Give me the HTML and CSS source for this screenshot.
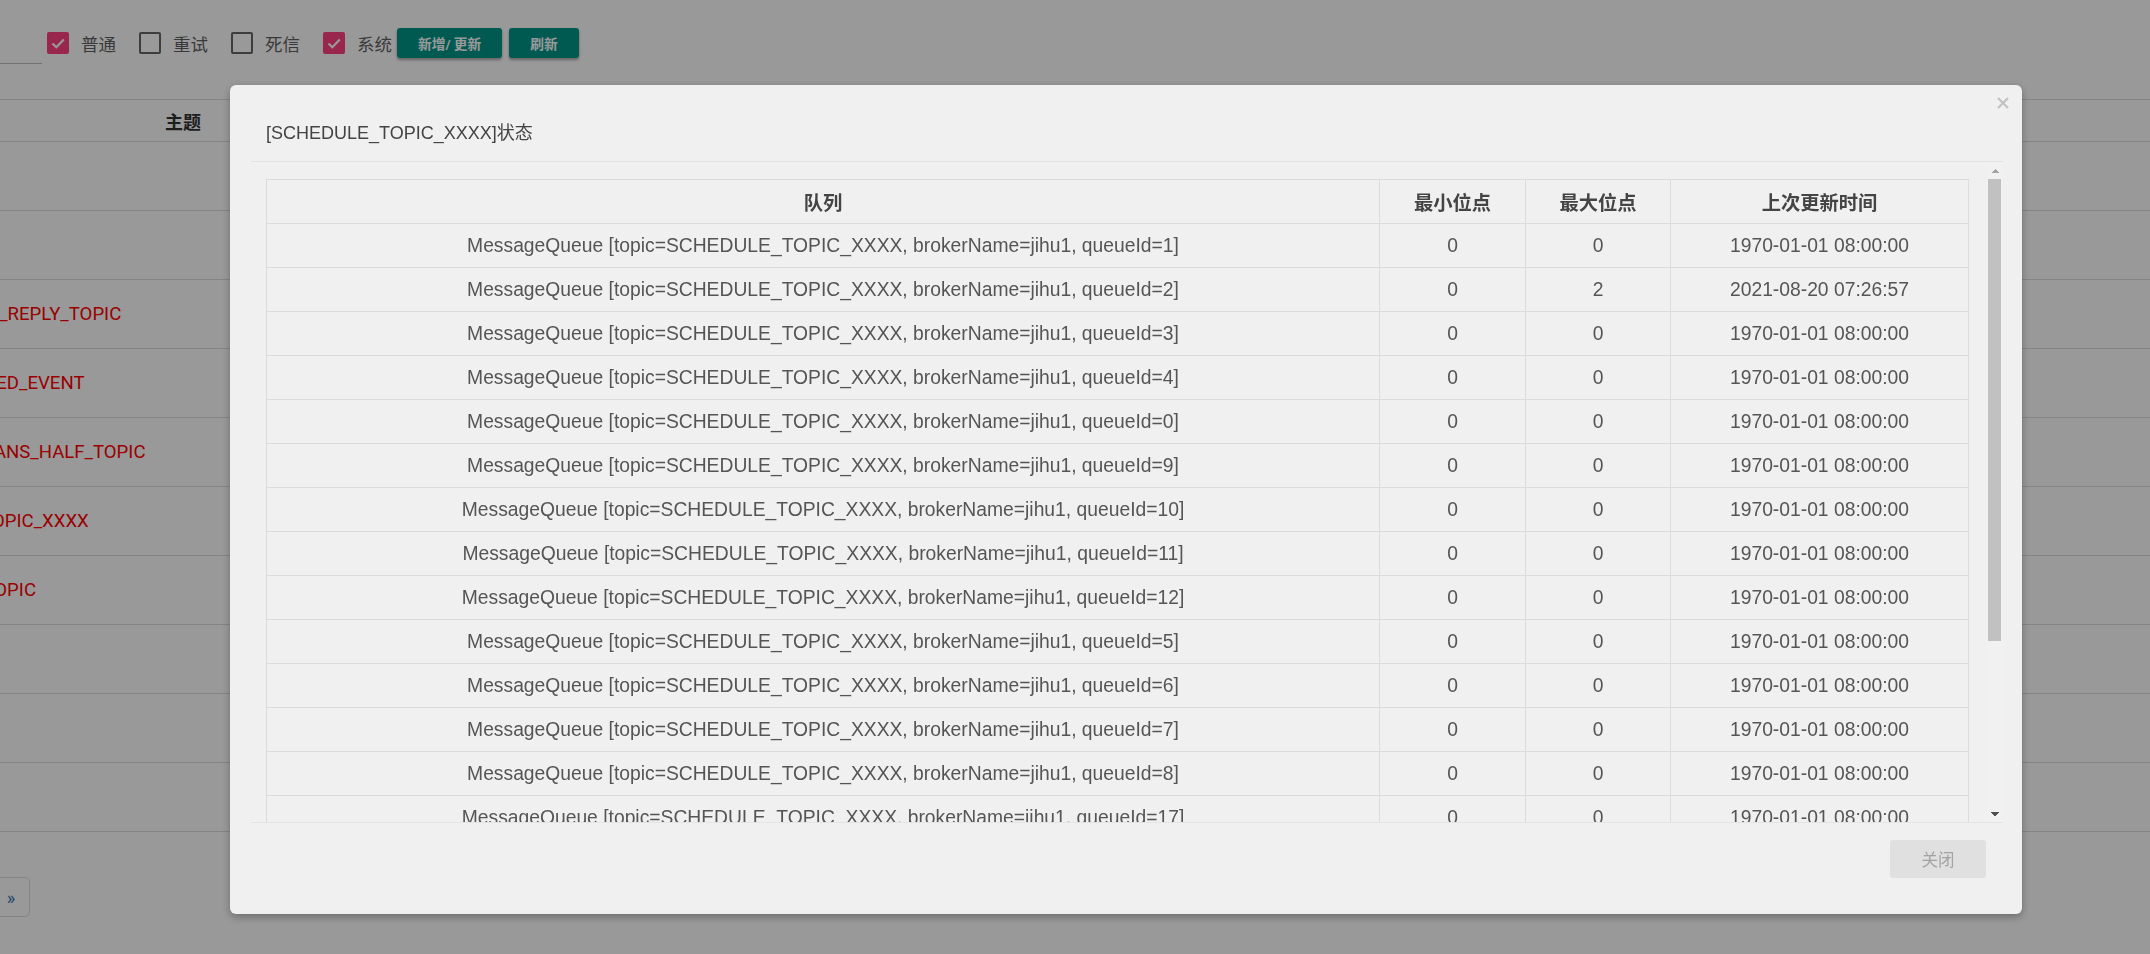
FILE: index.html
```html
<!DOCTYPE html>
<html lang="zh-CN">
<head>
<meta charset="utf-8">
<title>Topic</title>
<link rel="stylesheet" href="styles.css">
</head>
<body>
<div class="page">
  <div class="toolbar">
    <div class="filter-input"></div>
    <label class="chk"><span class="box checked"><svg viewBox="0 0 22 22" width="22" height="22"><path d="M5.5 11.5l3.8 3.8 7.5-7.8" fill="none" stroke="#fff" stroke-width="2.2"/></svg></span><span class="chk-label">普通</span></label>
    <label class="chk"><span class="box"></span><span class="chk-label">重试</span></label>
    <label class="chk"><span class="box"></span><span class="chk-label">死信</span></label>
    <label class="chk last"><span class="box checked"><svg viewBox="0 0 22 22" width="22" height="22"><path d="M5.5 11.5l3.8 3.8 7.5-7.8" fill="none" stroke="#fff" stroke-width="2.2"/></svg></span><span class="chk-label">系统</span></label>
    <button class="btn-raised">新增/ 更新</button>
    <button class="btn-raised">刷新</button>
  </div>
  <table class="topic-table">
    <thead>
      <tr><th class="col-topic">主题</th><th>操作</th></tr>
    </thead>
    <tbody>
      <tr><td class="topic">TBW102</td><td></td></tr>
      <tr><td class="topic">Benchmark</td><td></td></tr>
      <tr><td class="topic">DefaultCluster_REPLY_TOPIC</td><td></td></tr>
      <tr><td class="topic">OFFSET_MOVED_EVENT</td><td></td></tr>
      <tr><td class="topic">RMQ_SYS_TRANS_HALF_TOPIC</td><td></td></tr>
      <tr><td class="topic">SCHEDULE_TOPIC_XXXX</td><td></td></tr>
      <tr><td class="topic">SELF_TEST_TOPIC</td><td></td></tr>
      <tr><td class="topic">jihu1</td><td></td></tr>
      <tr><td class="topic">TopicA</td><td></td></tr>
      <tr><td class="topic">TopicB</td><td></td></tr>
    </tbody>
  </table>
  <ul class="pager">
    <li>«</li>
    <li>1</li>
    <li class="next">»</li>
  </ul>
</div>

<div class="backdrop">
  <div class="modal">
    <button class="close" aria-label="close"><svg viewBox="0 0 12 12" width="12" height="12"><path d="M1 1L11 11M11 1L1 11" stroke="#c2c2c2" stroke-width="2.2"/></svg></button>
    <div class="modal-header">[SCHEDULE_TOPIC_XXXX]状态</div>
    <div class="modal-body">
      <div class="scroll-content">
        <table class="queue-table">
          <colgroup><col class="c1"><col class="c2"><col class="c3"><col></colgroup>
          <thead>
            <tr><th>队列</th><th>最小位点</th><th>最大位点</th><th>上次更新时间</th></tr>
          </thead>
          <tbody>
            <tr><td>MessageQueue [topic=SCHEDULE_TOPIC_XXXX, brokerName=jihu1, queueId=1]</td><td>0</td><td>0</td><td>1970-01-01 08:00:00</td></tr>
            <tr><td>MessageQueue [topic=SCHEDULE_TOPIC_XXXX, brokerName=jihu1, queueId=2]</td><td>0</td><td>2</td><td>2021-08-20 07:26:57</td></tr>
            <tr><td>MessageQueue [topic=SCHEDULE_TOPIC_XXXX, brokerName=jihu1, queueId=3]</td><td>0</td><td>0</td><td>1970-01-01 08:00:00</td></tr>
            <tr><td>MessageQueue [topic=SCHEDULE_TOPIC_XXXX, brokerName=jihu1, queueId=4]</td><td>0</td><td>0</td><td>1970-01-01 08:00:00</td></tr>
            <tr><td>MessageQueue [topic=SCHEDULE_TOPIC_XXXX, brokerName=jihu1, queueId=0]</td><td>0</td><td>0</td><td>1970-01-01 08:00:00</td></tr>
            <tr><td>MessageQueue [topic=SCHEDULE_TOPIC_XXXX, brokerName=jihu1, queueId=9]</td><td>0</td><td>0</td><td>1970-01-01 08:00:00</td></tr>
            <tr><td>MessageQueue [topic=SCHEDULE_TOPIC_XXXX, brokerName=jihu1, queueId=10]</td><td>0</td><td>0</td><td>1970-01-01 08:00:00</td></tr>
            <tr><td>MessageQueue [topic=SCHEDULE_TOPIC_XXXX, brokerName=jihu1, queueId=11]</td><td>0</td><td>0</td><td>1970-01-01 08:00:00</td></tr>
            <tr><td>MessageQueue [topic=SCHEDULE_TOPIC_XXXX, brokerName=jihu1, queueId=12]</td><td>0</td><td>0</td><td>1970-01-01 08:00:00</td></tr>
            <tr><td>MessageQueue [topic=SCHEDULE_TOPIC_XXXX, brokerName=jihu1, queueId=5]</td><td>0</td><td>0</td><td>1970-01-01 08:00:00</td></tr>
            <tr><td>MessageQueue [topic=SCHEDULE_TOPIC_XXXX, brokerName=jihu1, queueId=6]</td><td>0</td><td>0</td><td>1970-01-01 08:00:00</td></tr>
            <tr><td>MessageQueue [topic=SCHEDULE_TOPIC_XXXX, brokerName=jihu1, queueId=7]</td><td>0</td><td>0</td><td>1970-01-01 08:00:00</td></tr>
            <tr><td>MessageQueue [topic=SCHEDULE_TOPIC_XXXX, brokerName=jihu1, queueId=8]</td><td>0</td><td>0</td><td>1970-01-01 08:00:00</td></tr>
            <tr><td>MessageQueue [topic=SCHEDULE_TOPIC_XXXX, brokerName=jihu1, queueId=17]</td><td>0</td><td>0</td><td>1970-01-01 08:00:00</td></tr>
            <tr><td>MessageQueue [topic=SCHEDULE_TOPIC_XXXX, brokerName=jihu1, queueId=13]</td><td>0</td><td>0</td><td>1970-01-01 08:00:00</td></tr>
            <tr><td>MessageQueue [topic=SCHEDULE_TOPIC_XXXX, brokerName=jihu1, queueId=14]</td><td>0</td><td>0</td><td>1970-01-01 08:00:00</td></tr>
            <tr><td>MessageQueue [topic=SCHEDULE_TOPIC_XXXX, brokerName=jihu1, queueId=15]</td><td>0</td><td>0</td><td>1970-01-01 08:00:00</td></tr>
            <tr><td>MessageQueue [topic=SCHEDULE_TOPIC_XXXX, brokerName=jihu1, queueId=16]</td><td>0</td><td>0</td><td>1970-01-01 08:00:00</td></tr>
          </tbody>
        </table>
      </div>
      <div class="scrollbar" aria-hidden="true">
        <div class="sb-btn up"></div>
        <div class="sb-track"><div class="sb-thumb"></div></div>
        <div class="sb-btn down"></div>
      </div>
    </div>
    <div class="modal-footer">
      <button class="btn-close">关闭</button>
    </div>
  </div>
</div>
</body>
</html>
```

FILE: styles.css
```css
html, body {
  margin: 0;
  padding: 0;
  background: #fff;
  overflow: hidden;
}
body {
  font-family: "Liberation Sans", "Noto Sans CJK SC", sans-serif;
  color: #333;
  width: 2150px;
  height: 954px;
}

/* ---------- background page ---------- */
.page {
  margin-left: -180px;
  font-family: Roboto, "Noto Sans CJK SC", sans-serif;
}
.toolbar {
  display: flex;
  align-items: center;
  height: 34px;
  padding-top: 26px;
}
.filter-input {
  align-self: flex-start;
  width: 222px;
  height: 37px;
  border-bottom: 1px solid #bdbdbd;
  margin-right: 5px;
}
.chk {
  display: flex;
  align-items: center;
  margin-right: 23px;
}
.chk.last { margin-right: 5px; }
.box {
  width: 22px;
  height: 22px;
  box-sizing: border-box;
  border: 2px solid rgba(0,0,0,.6);
  border-radius: 2px;
  display: block;
}
.box.checked {
  border: none;
  background: #ff4081;
}
.box svg { display: block; }
.chk-label {
  margin-left: 12px;
  font-size: 17.5px;
  color: #5f5f5f;
}
.btn-raised {
  height: 30px;
  padding: 0 21px;
  margin-right: 7px;
  border: none;
  border-radius: 3px;
  background: #009688;
  color: #fff;
  font-family: inherit;
  font-size: 13.7px;
  font-weight: bold;
  box-shadow: 0 2px 3px rgba(0,0,0,.35);
}
.topic-table {
  margin-top: 39px;
  width: 100%;
  border-collapse: collapse;
  table-layout: fixed;
}
.topic-table th,
.topic-table td {
  border-top: 1px solid #ddd;
  border-bottom: 1px solid #ddd;
  padding: 0;
}
.topic-table th {
  height: 41px;
  font-size: 18px;
  font-weight: bold;
  color: #333;
  text-align: center;
}
.topic-table th.col-topic { width: 726px; }
.topic-table td {
  height: 68px;
}
.topic-table td.topic {
  padding-left: 61px;
  font-size: 18.6px;
  color: #f00;
  white-space: nowrap;
}
.pager {
  list-style: none;
  display: flex;
  margin: 45px 0 0 99px;
  padding: 0;
}
.pager li {
  width: 36px;
  height: 38px;
  border: 1px solid #ddd;
  margin-left: -1px;
  display: flex;
  align-items: center;
  justify-content: center;
  font-size: 18px;
  color: #337ab7;
}
.pager li.next {
  border-radius: 0 5px 5px 0;
}

/* ---------- modal ---------- */
.backdrop {
  position: fixed;
  inset: 0;
  background: rgba(0,0,0,.4);
  padding: 85px 0 0 230px;
}
.modal {
  position: relative;
  width: 1792px;
  height: 829px;
  box-sizing: border-box;
  padding: 0 19px 0 21px;
  background: #f0f0f0;
  border-radius: 6px;
  box-shadow: 0 3px 9px rgba(0,0,0,.3);
  display: flex;
  flex-direction: column;
}
.close {
  position: absolute;
  right: 13px;
  top: 12px;
  padding: 0;
  border: none;
  background: none;
  line-height: 0;
}
.modal-header {
  padding: 36px 0 16px 15px;
  line-height: 24px;
  font-size: 18px;
  color: #444;
  border-bottom: 1px solid #e2e2e2;
}
.modal-body {
  height: 660px;
  display: flex;
}
.scroll-content {
  flex: 1;
  min-width: 0;
  overflow: hidden;
  padding: 17px 17px 0 15px;
}
.scrollbar {
  width: 17px;
  display: flex;
  flex-direction: column;
  background: #f1f1f1;
}
.sb-btn {
  height: 17px;
  background-repeat: no-repeat;
  background-size: 8px 4px;
  background-position: center;
}
.sb-btn.up {
  background-image: conic-gradient(from 135deg at 50% 0, #a3a3a3 90deg, transparent 0);
}
.sb-btn.down {
  background-image: conic-gradient(from -45deg at 50% 100%, #505050 90deg, transparent 0);
}
.sb-track {
  flex: 1;
  padding: 0 2px;
}
.sb-thumb {
  height: 462px;
  background: #c1c1c1;
}
.queue-table {
  width: 100%;
  border-collapse: collapse;
  table-layout: fixed;
  font-size: 19.3px;
  color: #555;
}
.queue-table col.c1 { width: 1113px; }
.queue-table col.c2 { width: 146px; }
.queue-table col.c3 { width: 145px; }
.queue-table th,
.queue-table td {
  border: 1px solid #dcdcdc;
  height: 43px;
  padding: 0 8px;
  text-align: center;
  white-space: nowrap;
}
.queue-table th {
  font-weight: bold;
  color: #444;
}
.modal-footer {
  flex: 1;
  border-top: 1px solid #e4e4e4;
  display: flex;
  justify-content: flex-end;
  align-items: flex-start;
  padding: 17px 17px 0 0;
}
.btn-close {
  width: 96px;
  height: 38px;
  border: none;
  border-radius: 3px;
  background: #e0e0e0;
  color: #a3a3a3;
  font-family: inherit;
  font-size: 16.5px;
}
```
